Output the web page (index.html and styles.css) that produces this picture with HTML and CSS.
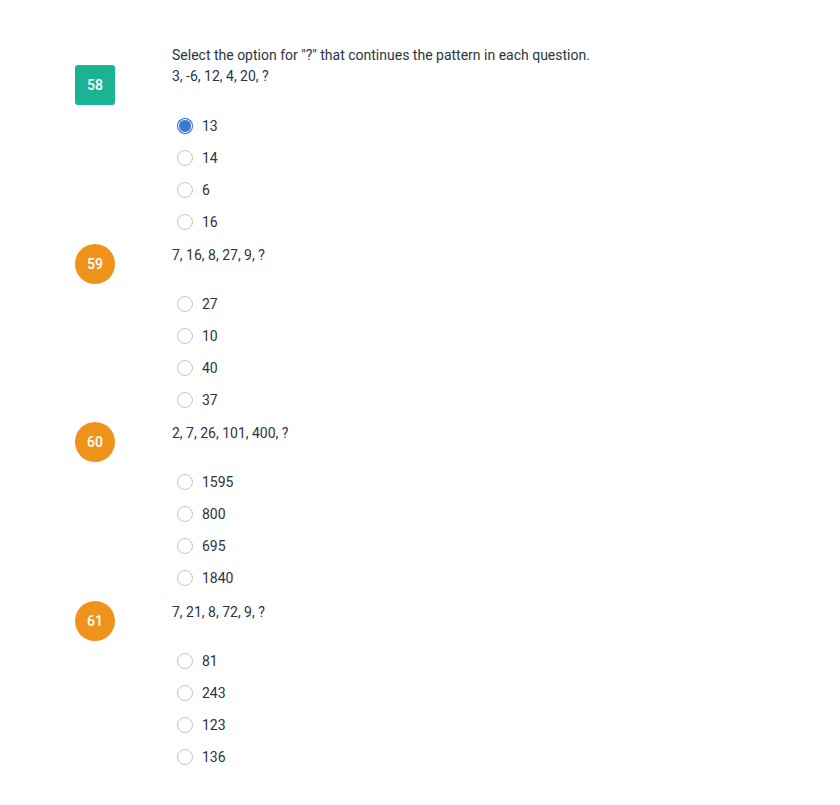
FILE: index.html
```html
<!DOCTYPE html>
<html>
<head>
<meta charset="utf-8">
<link rel="stylesheet" href="styles.css">
</head>
<body>
<div class="page">
  <section class="block block-first">
    <p class="instruction">Select the option for "?" that continues the pattern in each question.</p>
    <div class="q-head">
      <div class="badge badge-answered">58</div>
      <p class="q-text">3, -6, 12, 4, 20, ?</p>
    </div>
    <ul class="options">
      <li class="option"><span class="radio radio-checked"></span><span>13</span></li>
      <li class="option"><span class="radio"></span><span>14</span></li>
      <li class="option"><span class="radio"></span><span>6</span></li>
      <li class="option"><span class="radio"></span><span>16</span></li>
    </ul>
  </section>
  <section class="block">
    <div class="q-head">
      <div class="badge badge-pending">59</div>
      <p class="q-text">7, 16, 8, 27, 9, ?</p>
    </div>
    <ul class="options">
      <li class="option"><span class="radio"></span><span>27</span></li>
      <li class="option"><span class="radio"></span><span>10</span></li>
      <li class="option"><span class="radio"></span><span>40</span></li>
      <li class="option"><span class="radio"></span><span>37</span></li>
    </ul>
  </section>
  <section class="block">
    <div class="q-head">
      <div class="badge badge-pending">60</div>
      <p class="q-text">2, 7, 26, 101, 400, ?</p>
    </div>
    <ul class="options">
      <li class="option"><span class="radio"></span><span>1595</span></li>
      <li class="option"><span class="radio"></span><span>800</span></li>
      <li class="option"><span class="radio"></span><span>695</span></li>
      <li class="option"><span class="radio"></span><span>1840</span></li>
    </ul>
  </section>
  <section class="block">
    <div class="q-head">
      <div class="badge badge-pending">61</div>
      <p class="q-text">7, 21, 8, 72, 9, ?</p>
    </div>
    <ul class="options">
      <li class="option"><span class="radio"></span><span>81</span></li>
      <li class="option"><span class="radio"></span><span>243</span></li>
      <li class="option"><span class="radio"></span><span>123</span></li>
      <li class="option"><span class="radio"></span><span>136</span></li>
    </ul>
  </section>
</div>
</body>
</html>
```
FILE: styles.css
```css
html, body {
  margin: 0;
  padding: 0;
  background: #ffffff;
}
body {
  font-family: Roboto, "Liberation Sans", sans-serif;
  font-size: 14px;
  color: #2b3442;
}
.page {
  padding: 45px 0 0 75px;
}
.block {
  margin-bottom: 6.5px;
}
.block-first {
  margin-bottom: 5.5px;
}
.instruction {
  margin: 0 0 0 97px;
  line-height: 20px;
}
.q-head {
  display: flex;
  align-items: flex-start;
  gap: 57px;
}
.q-text {
  margin: 0;
  line-height: 20px;
  padding-top: 1px;
}
.badge {
  width: 40px;
  height: 40px;
  flex: none;
  display: flex;
  align-items: center;
  justify-content: center;
  color: #ffffff;
  font-size: 14px;
  font-weight: 500;
}
.badge-answered {
  background: #1ab394;
  border-radius: 3px;
}
.badge-pending {
  background: #f0931a;
  border-radius: 50%;
}
.options {
  list-style: none;
  margin: 4px 0 0 97px;
  padding: 0;
}
.block-first .options {
  margin-top: 5px;
}
.option {
  height: 32px;
  display: flex;
  align-items: center;
  gap: 9px;
  padding-left: 5px;
}
.radio {
  width: 16px;
  height: 16px;
  box-sizing: border-box;
  border: 1px solid #c6c6c6;
  border-radius: 50%;
  background: #ffffff;
  flex: none;
}
.radio-checked {
  width: 14px;
  height: 14px;
  margin: 1px;
  border: 1px solid #ffffff;
  background: #3a7bd2;
  box-shadow: 0 0 0 1px #2a6fd6;
}
```
